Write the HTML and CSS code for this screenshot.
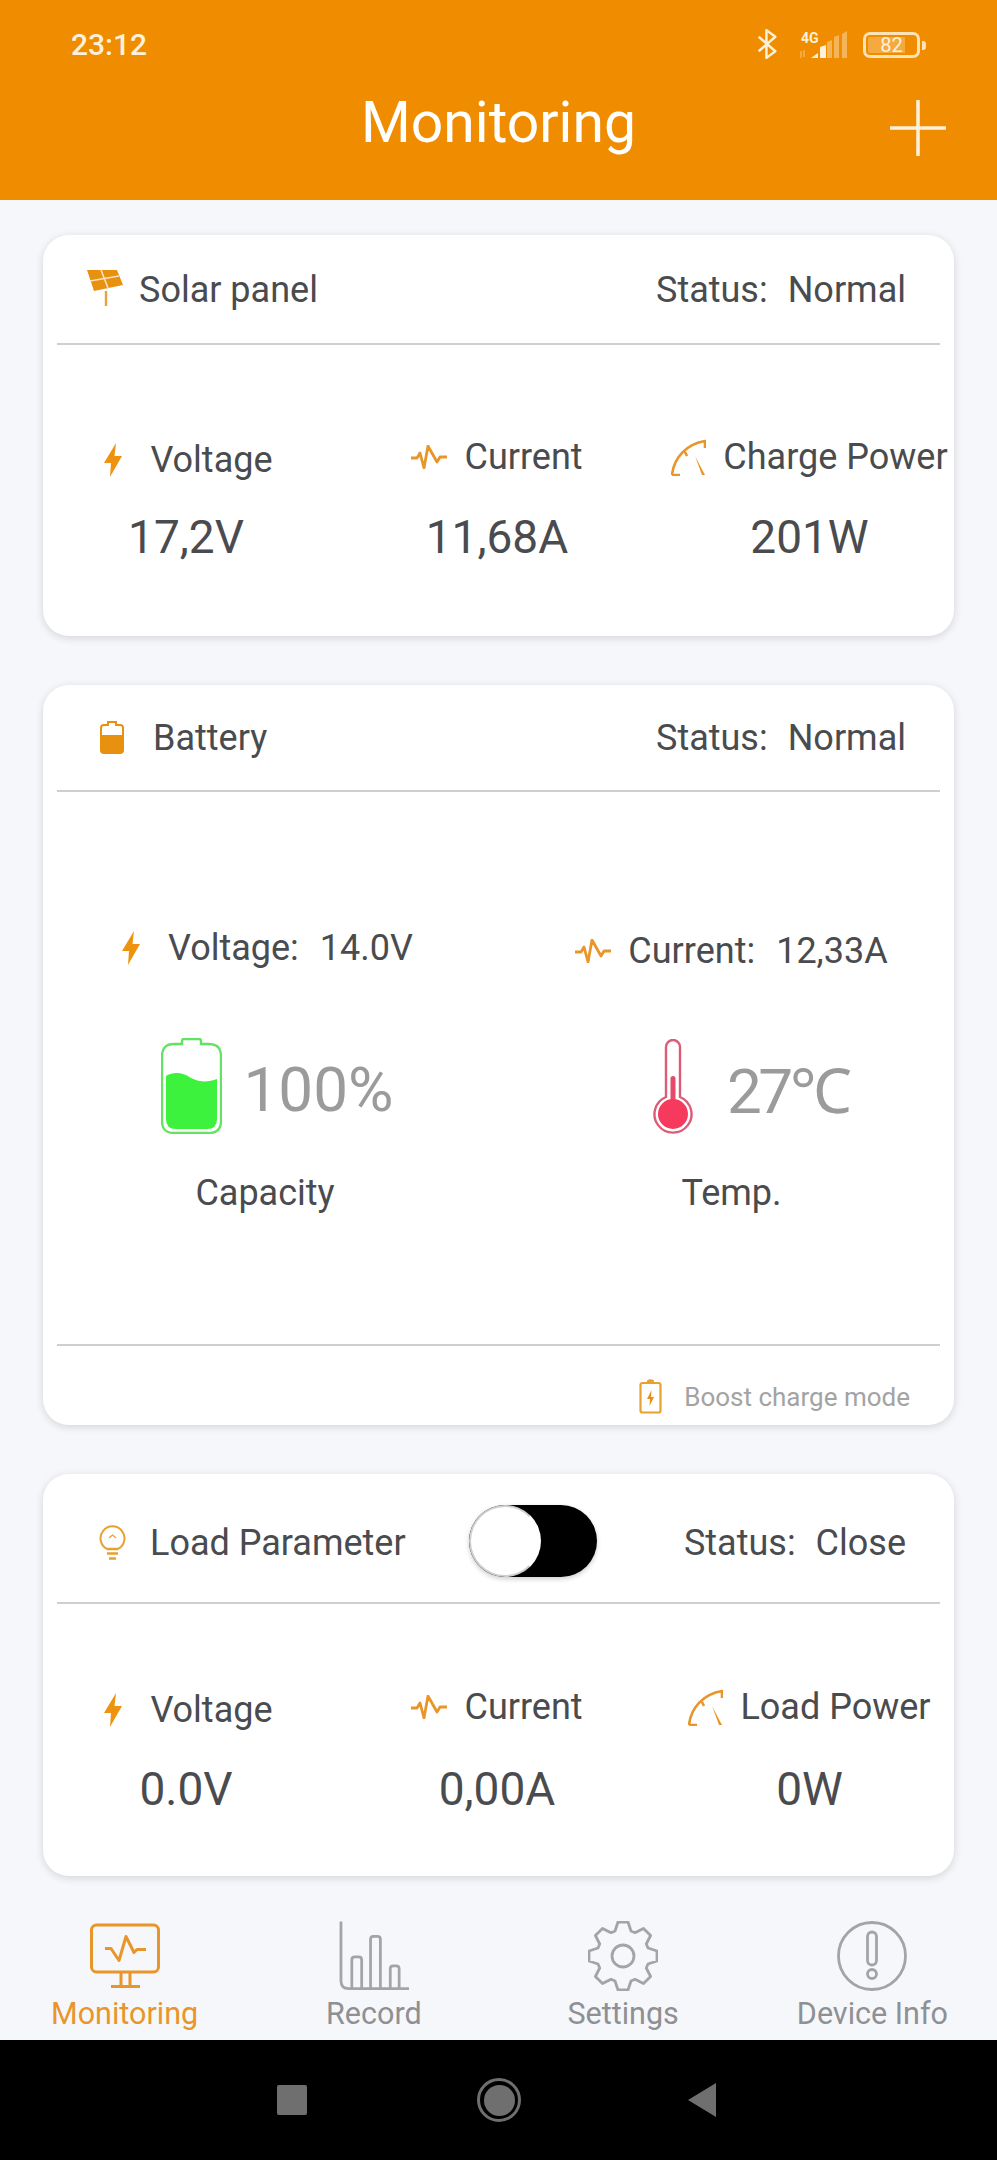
FILE: index.html
```html
<!DOCTYPE html>
<html lang="en">
<head>
    <meta charset="UTF-8">
    <meta name="viewport" content="width=device-width, initial-scale=1.0">
    <title>Monitoring</title>
    <link rel="stylesheet" href="styles.css">
</head>
<body>
    <!-- Shared icons -->
    <svg class="icon-defs" aria-hidden="true">
        <symbol id="i-bolt" viewBox="0 0 18 34">
            <path d="M12 0 L0 20 H7 L6 34 L18 13 H10.5 Z" fill="currentColor"/>
        </symbol>
        <symbol id="i-wave" viewBox="0 0 36 24">
            <path d="M0 13 H6 L9 8 L13 23 L17 1 L26 17 L29 12 H36" fill="none" stroke="currentColor" stroke-width="2.8" stroke-linejoin="round"/>
        </symbol>
        <symbol id="i-gauge" viewBox="0 0 35 37">
            <path d="M1 36 C3 18 16 5 34 2 V9 M1 36 H9 M14 13 L16 17" fill="none" stroke="currentColor" stroke-width="2.6" stroke-linejoin="round"/>
            <path d="M24 17 L34 36 L31 36 Z" fill="currentColor"/>
        </symbol>
    </svg>

    <!-- Header -->
    <header class="app-header">
        <div class="status-bar">
            <span class="clock">23:12</span>
            <div class="status-icons">
                <svg class="ic-bluetooth" viewBox="0 0 19 27">
                    <path d="M2 7 L17 20 L9 26 V1 L17 7 L2 20" fill="none" stroke="currentColor" stroke-width="2.2" stroke-linejoin="round"/>
                </svg>
                <div class="signal">
                    <span class="net-type">4G</span>
                    <svg class="ic-signal" viewBox="0 0 48 28">
                        <path d="M1 20 V27 M4 26 V19" fill="none" stroke="currentColor" stroke-width="1.2" opacity=".5"/>
                        <path d="M11 27 L18 22 V27 Z M20 27 V16 L26 14 V27 Z" fill="currentColor"/>
                        <path d="M27 27 V11 L32 9 V27 Z M34 27 V6 L39 4 V27 Z M42 27 V3 L47 0 V27 Z" fill="currentColor" opacity=".4"/>
                    </svg>
                </div>
                <div class="phone-battery">
                    <div class="phone-battery-body"><span>82</span></div>
                    <div class="phone-battery-nub"></div>
                </div>
            </div>
        </div>
        <div class="title-row">
            <h1>Monitoring</h1>
            <svg class="ic-plus" viewBox="0 0 56 56">
                <path d="M28 0 V56 M0 28 H56" stroke="currentColor" stroke-width="3.5"/>
            </svg>
        </div>
    </header>

    <main class="cards">
        <!-- Solar panel -->
        <section class="card card-solar">
            <div class="card-head">
                <div class="head-name head-solar">
                    <svg class="ic-solar" viewBox="0 0 36 36">
                        <path d="M0 0 H30 L36 15 L7 21 Z" fill="#e8900f"/>
                        <path d="M3 11 L32 6 M14 0 L21 18" stroke="#fbe3bd" stroke-width="1.6"/>
                        <path d="M19 21 V36" stroke="#e8a040" stroke-width="2.4"/>
                    </svg>
                    <span>Solar panel</span>
                </div>
                <div class="status"><span>Status:</span><span>Normal</span></div>
            </div>
            <div class="stats">
                <div class="stat">
                    <div class="stat-label label-low">
                        <svg class="ic-bolt"><use href="#i-bolt"/></svg>
                        <span>Voltage</span>
                    </div>
                    <div class="stat-value">17,2V</div>
                </div>
                <div class="stat">
                    <div class="stat-label">
                        <svg class="ic-wave"><use href="#i-wave"/></svg>
                        <span>Current</span>
                    </div>
                    <div class="stat-value">11,68A</div>
                </div>
                <div class="stat">
                    <div class="stat-label">
                        <svg class="ic-gauge"><use href="#i-gauge"/></svg>
                        <span>Charge Power</span>
                    </div>
                    <div class="stat-value">201W</div>
                </div>
            </div>
        </section>

        <!-- Battery -->
        <section class="card card-battery">
            <div class="card-head">
                <div class="head-name head-battery">
                    <svg class="ic-head-battery" viewBox="0 0 24 33">
                        <path d="M8 1 H16 V4 H20 Q23 4 23 7 V29 Q23 32 20 32 H4 Q1 32 1 29 V7 Q1 4 4 4 H8 Z" fill="none" stroke="#e8900f" stroke-width="2"/>
                        <path d="M1 14 H23 V29 Q23 32 20 32 H4 Q1 32 1 29 Z" fill="#e8900f"/>
                    </svg>
                    <span>Battery</span>
                </div>
                <div class="status"><span>Status:</span><span>Normal</span></div>
            </div>
            <div class="battery-grid">
                <div class="battery-col col-capacity">
                    <div class="stat-label">
                        <svg class="ic-bolt"><use href="#i-bolt"/></svg>
                        <span class="pair"><span>Voltage:</span><span>14.0V</span></span>
                    </div>
                    <div class="big-row">
                        <svg class="ic-big-battery" viewBox="0 0 61 96">
                            <path d="M21 6 V3 Q21 1 23 1 H38 Q40 1 40 3 V6 H48 Q60 6 60 18 V83 Q60 95 48 95 H13 Q1 95 1 83 V18 Q1 6 13 6 Z" fill="none" stroke="#62e462" stroke-width="2.4"/>
                            <path d="M5 38 C14 33 22 35 30 40 C40 45 48 44 56 41 V81 Q56 91 46 91 H15 Q5 91 5 81 Z" fill="#3cf23c"/>
                        </svg>
                        <span class="big-value">100%</span>
                    </div>
                    <div class="big-caption">Capacity</div>
                </div>
                <div class="battery-col col-temp">
                    <div class="stat-label label-low">
                        <svg class="ic-wave"><use href="#i-wave"/></svg>
                        <span class="pair"><span>Current:</span><span>12,33A</span></span>
                    </div>
                    <div class="big-row">
                        <svg class="ic-thermo" viewBox="0 0 40 95">
                            <path d="M13 58 V8 A7 7 0 0 1 27 8 V58 A18.5 18.5 0 1 1 13 58 Z" fill="none" stroke="#dc5c78" stroke-width="2.4"/>
                            <rect x="17.5" y="37" width="5" height="34" rx="2.5" fill="#e8486a"/>
                            <circle cx="20" cy="75" r="15" fill="#f63a5e"/>
                        </svg>
                        <span class="big-value temp-value">27℃</span>
                    </div>
                    <div class="big-caption">Temp.</div>
                </div>
            </div>
            <div class="card-foot">
                <svg class="ic-boost" viewBox="0 0 23 35">
                    <rect x="1.5" y="4" width="20" height="29.5" rx="2" fill="none" stroke="#e8a030" stroke-width="2.2"/>
                    <path d="M8 1.5 Q11.5 -1 15 1.5 V4 H8 Z" fill="#e8a030"/>
                    <path d="M12.5 11 L8 20 H11 L10.5 27 L15 18 H12 Z" fill="#e8900f"/>
                </svg>
                <span>Boost charge mode</span>
            </div>
        </section>

        <!-- Load -->
        <section class="card card-load">
            <div class="card-head">
                <div class="head-name head-load">
                    <svg class="ic-bulb" viewBox="0 0 27 35">
                        <path d="M8 24 A12 12 0 1 1 19 24" fill="none" stroke="#e8a030" stroke-width="2"/>
                        <path d="M10 13 L13.5 10 L17 13" fill="none" stroke="#e8a030" stroke-width="1.2"/>
                        <path d="M8 24 H19 M8 28.5 H19 M10 33.5 H17" stroke="#e8a030" stroke-width="2.4"/>
                    </svg>
                    <span>Load Parameter</span>
                </div>
                <div class="switch"><div class="switch-knob"></div></div>
                <div class="status"><span>Status:</span><span>Close</span></div>
            </div>
            <div class="stats">
                <div class="stat">
                    <div class="stat-label label-low">
                        <svg class="ic-bolt"><use href="#i-bolt"/></svg>
                        <span>Voltage</span>
                    </div>
                    <div class="stat-value">0.0V</div>
                </div>
                <div class="stat">
                    <div class="stat-label">
                        <svg class="ic-wave"><use href="#i-wave"/></svg>
                        <span>Current</span>
                    </div>
                    <div class="stat-value">0,00A</div>
                </div>
                <div class="stat">
                    <div class="stat-label">
                        <svg class="ic-gauge"><use href="#i-gauge"/></svg>
                        <span>Load Power</span>
                    </div>
                    <div class="stat-value">0W</div>
                </div>
            </div>
        </section>
    </main>

    <!-- Tabs -->
    <nav class="tabs">
        <a class="tab active" href="#">
            <svg viewBox="0 0 70 65">
                <rect x="1.5" y="1.5" width="67" height="47" rx="5" fill="none" stroke="currentColor" stroke-width="3"/>
                <path d="M15 25 H21 L29 37 L36 13 L44 29 L47 26 H56 M31 49 V63 M40 49 V63 M21 63 H50" fill="none" stroke="currentColor" stroke-width="3" stroke-linejoin="round"/>
            </svg>
            <span>Monitoring</span>
        </a>
        <a class="tab" href="#">
            <svg viewBox="0 0 71 70">
                <path d="M2 0 V60 Q2 68 10 68 H71 M13 68 V39 Q13 36 16 36 H20 Q23 36 23 39 V68 M32 68 V18 Q32 15 35 15 H39 Q42 15 42 18 V68 M52 68 V48 Q52 45 55 45 H58 Q61 45 61 48 V68" fill="none" stroke="currentColor" stroke-width="2.8"/>
            </svg>
            <span>Record</span>
        </a>
        <a class="tab" href="#">
            <svg viewBox="0 0 70 70">
                <path d="M27 10 L30 1 H40 L43 10 L47 11.7 L55.5 7.4 L62.6 14.5 L58.3 23 L60 27 L69 30 V40 L60 43 L58.3 47 L62.6 55.5 L55.5 62.6 L47 58.3 L43 60 L40 69 H30 L27 60 L23 58.3 L14.5 62.6 L7.4 55.5 L11.7 47 L10 43 L1 40 V30 L10 27 L11.7 23 L7.4 14.5 L14.5 7.4 L23 11.7 Z" fill="none" stroke="currentColor" stroke-width="2.8" stroke-linejoin="round"/>
                <circle cx="35" cy="35" r="11" fill="none" stroke="currentColor" stroke-width="2.8"/>
            </svg>
            <span>Settings</span>
        </a>
        <a class="tab" href="#">
            <svg viewBox="0 0 70 70">
                <circle cx="35" cy="35" r="33.5" fill="none" stroke="currentColor" stroke-width="2.8"/>
                <rect x="30.5" y="11" width="9" height="33" rx="4.5" fill="none" stroke="currentColor" stroke-width="2.8"/>
                <circle cx="35" cy="53" r="4.5" fill="none" stroke="currentColor" stroke-width="2.8"/>
            </svg>
            <span>Device Info</span>
        </a>
    </nav>

    <!-- Android nav bar -->
    <div class="system-nav">
        <div class="sys-square"></div>
        <div class="sys-home"><div class="sys-home-dot"></div></div>
        <svg class="sys-back" viewBox="0 0 28 34"><path d="M0 17 L28 0 V34 Z" fill="#6f6f6f"/></svg>
    </div>
</body>
</html>
```

FILE: styles.css
```css
:root {
    --orange: #f08c00;
    --icon-orange: #e8962a;
    --text-color: #4a4b4e;
    --grey-text: #9b9b9b;
    --background-color: #f6f7fb;
}
* {
    margin: 0;
    padding: 0;
    box-sizing: border-box;
}
body {
    width: 997px;
    height: 2160px;
    overflow: hidden;
    font-family: 'Roboto', sans-serif;
    background-color: var(--background-color);
    color: var(--text-color);
    display: flex;
    flex-direction: column;
}
.icon-defs {
    display: none;
}
/* Header */
.app-header {
    height: 200px;
    background-color: var(--orange);
    color: #fdf1dc;
    flex-shrink: 0;
}
.status-bar {
    height: 88px;
    display: flex;
    justify-content: space-between;
    align-items: center;
    padding: 0 71px 0 71px;
}
.clock {
    font-size: 30px;
    font-weight: 500;
}
.status-icons {
    display: flex;
    align-items: center;
}
.ic-bluetooth {
    width: 22px;
    height: 30px;
}
.signal {
    position: relative;
    width: 48px;
    height: 28px;
    margin-left: 22px;
    margin-top: 2px;
}
.ic-signal {
    display: block;
    width: 48px;
    height: 28px;
}
/* network label sits over the corner of the signal bars */
.net-type {
    position: absolute;
    left: 1px;
    top: 0;
    font-size: 14px;
    line-height: 14px;
    font-weight: 700;
}
.phone-battery {
    display: flex;
    align-items: center;
    margin-left: 15px;
    margin-top: 2px;
}
.phone-battery-body {
    width: 57px;
    height: 26px;
    border: 3px solid #fde3b6;
    border-radius: 7px;
    padding: 2px;
    background: linear-gradient(to right, #f5a93f 77%, transparent 77%);
    background-clip: content-box;
    display: flex;
    align-items: center;
    justify-content: center;
}
.phone-battery-body span {
    font-size: 20px;
    line-height: 16px;
    color: #fdf1dc;
}
.phone-battery-nub {
    width: 4px;
    height: 9px;
    margin-left: 2px;
    background-color: #fde3b6;
    border-radius: 0 3px 3px 0;
}
.title-row {
    position: relative;
    height: 112px;
    display: flex;
    justify-content: center;
}
.title-row h1 {
    font-size: 57px;
    font-weight: 400;
    line-height: 68px;
    margin-top: 1px;
    color: #fff;
}
.ic-plus {
    position: absolute;
    right: 51px;
    top: 12px;
    width: 56px;
    height: 56px;
}
/* Cards */
.cards {
    padding: 35px 43px 0;
    display: flex;
    flex-direction: column;
    gap: 49px;
    flex-shrink: 0;
}
.card {
    background-color: #fff;
    border-radius: 26px;
    box-shadow: 0 2px 8px rgba(0,0,0,0.14);
    display: flex;
    flex-direction: column;
}
.card-solar { height: 401px; }
.card-battery { height: 740px; }
.card-load { height: 402px; }
.card-head {
    height: 110px;
    margin: 0 14px;
    border-bottom: 2px solid #cfcfcf;
    display: flex;
    align-items: center;
    justify-content: space-between;
    padding-right: 34px;
    font-size: 36px;
    flex-shrink: 0;
}
.card-solar .card-head { padding-top: 2px; }
.card-battery .card-head { height: 107px; }
.card-load .card-head {
    height: 130px;
    padding-top: 9px;
}
.head-name {
    display: flex;
    align-items: center;
}
.head-solar { padding-left: 30px; gap: 16px; }
.head-battery { padding-left: 43px; gap: 29px; }
.head-load { padding-left: 42px; gap: 24px; }
.ic-solar { width: 36px; height: 36px; margin-top: -4px; }
.ic-head-battery { width: 24px; height: 33px; }
.ic-bulb { width: 27px; height: 35px; }
.status {
    display: flex;
    gap: 20px;
}
/* Stat rows */
.stats {
    flex: 1;
    display: grid;
    grid-template-columns: 286px 336px 289px;
    align-content: start;
}
.card-solar .stats { padding-top: 91px; }
.card-load .stats { padding-top: 82px; }
.stat {
    display: flex;
    flex-direction: column;
    align-items: center;
    gap: 32px;
}
.card-load .stat { gap: 34px; }
.stat-label {
    display: flex;
    align-items: center;
    font-size: 36px;
    line-height: 42px;
    white-space: nowrap;
    gap: 17px;
    color: var(--text-color);
}
/* these labels sit slightly lower than the others in the app */
.label-low {
    margin-top: 3px;
    margin-bottom: -3px;
}
.ic-bolt { width: 18px; height: 34px; margin: 0 5px; color: #ee930f; }
.stat-label .ic-bolt + span { margin-left: 6px; }
.ic-wave { width: 36px; height: 24px; color: var(--icon-orange); }
.ic-gauge { width: 35px; height: 37px; color: var(--icon-orange); }
.stat-value {
    font-size: 46px;
    line-height: 54px;
}
/* Battery body */
.battery-grid {
    flex: 1;
    display: grid;
    grid-template-columns: 444px 1fr;
    padding-top: 135px;
}
.battery-col {
    display: flex;
    flex-direction: column;
    align-items: center;
}
.col-temp { padding-left: 22px; }
.pair {
    display: flex;
    gap: 21px;
}
.big-row {
    display: flex;
    align-items: center;
    height: 100px;
    margin-top: 67px;
    gap: 22px;
}
.col-capacity .big-row { margin-left: 24px; }
.col-temp .big-row { margin-left: 38px; gap: 25px; }
.ic-big-battery { width: 61px; height: 96px; }
.ic-thermo { width: 40px; height: 95px; margin-right: 9px; }
.big-value {
    font-size: 62px;
    color: var(--grey-text);
    margin-top: 6px;
}
.temp-value {
    letter-spacing: -3.5px;
}
.big-caption {
    font-size: 36px;
    line-height: 42px;
    margin-top: 36px;
}
.card-foot {
    height: 81px;
    margin: 0 14px;
    padding: 22px 30px 0 0;
    border-top: 2px solid #cfcfcf;
    display: flex;
    align-items: center;
    justify-content: flex-end;
    gap: 22px;
    font-size: 26px;
    color: #a3a3a3;
    flex-shrink: 0;
}
.ic-boost { width: 23px; height: 35px; }
/* Toggle */
.switch {
    position: relative;
    width: 128px;
    height: 72px;
    margin: -4px auto 0 63px;
    border-radius: 36px;
    background-color: #000;
    box-shadow: 0 2px 5px rgba(0,0,0,0.2);
}
.switch-knob {
    position: absolute;
    left: 0;
    top: 0;
    width: 72px;
    height: 72px;
    border-radius: 50%;
    background-color: #fff;
    border: 2px solid #cfcfcf;
    border-right-color: #fff;
}
/* Tabs */
.tabs {
    flex: 1;
    display: grid;
    grid-template-columns: repeat(4, 1fr);
    padding-top: 45px;
}
.tab {
    display: flex;
    flex-direction: column;
    align-items: center;
    color: #8e9093;
    text-decoration: none;
    font-size: 30.5px;
    line-height: 36px;
}
.tab svg {
    width: 70px;
    height: 70px;
    margin-bottom: 5px;
    color: #a3a4a6;
}
.tab.active,
.tab.active svg {
    color: var(--icon-orange);
}
/* System nav */
.system-nav {
    height: 120px;
    background-color: #000;
    display: flex;
    align-items: center;
    padding-left: 277px;
    flex-shrink: 0;
}
.sys-square {
    width: 30px;
    height: 30px;
    border-radius: 2px;
    background-color: #6f6f6f;
}
.sys-home {
    width: 44px;
    height: 44px;
    margin-left: 170px;
    border: 3px solid #6f6f6f;
    border-radius: 50%;
    display: flex;
    align-items: center;
    justify-content: center;
}
.sys-home-dot {
    width: 31px;
    height: 31px;
    border-radius: 50%;
    background-color: #6f6f6f;
}
.sys-back {
    width: 28px;
    height: 34px;
    margin-left: 167px;
}
```
